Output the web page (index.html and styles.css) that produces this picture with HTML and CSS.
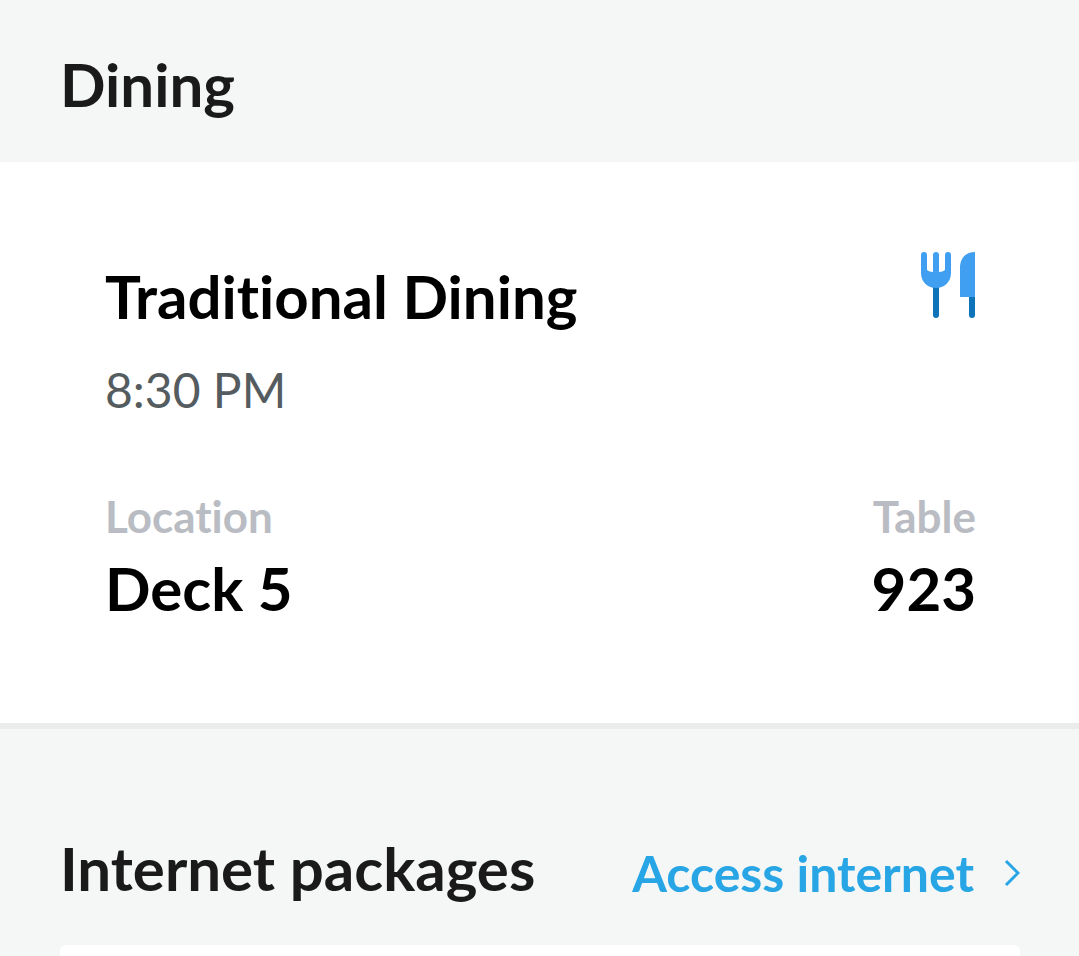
FILE: index.html
```html
<!DOCTYPE html>
<html lang="en">
<head>
<meta charset="utf-8">
<meta name="viewport" content="width=device-width, initial-scale=1">
<title>Dining</title>
<link rel="stylesheet" href="styles.css">
</head>
<body>
<main class="page">
  <header class="section-head">
    <h1 class="section-title">Dining</h1>
  </header>
  <section class="dining">
    <div class="row">
      <h2 class="dining-name">Traditional Dining</h2>
      <svg class="cutlery" viewBox="0 0 56 68" aria-hidden="true">
        <path fill="#0f73b9" d="M13 34h6v31a3 3 0 0 1-6 0zM49 44h6v21a3 3 0 0 1-6 0z"/>
        <path fill="#409ff0" d="M1 5a3 3 0 0 1 6 0v15q2 2 6 2V5a3 3 0 0 1 6 0v17q4 0 6-2V5a3 3 0 0 1 6 0v18c0 9-7 15-15 15S1 32 1 23zM55 2v45H40V18C40 8 46 2 55 2z"/>
      </svg>
    </div>
    <p class="time">8:30 PM</p>
    <dl class="row details">
      <div>
        <dt class="label">Location</dt>
        <dd class="value">Deck 5</dd>
      </div>
      <div class="end">
        <dt class="label">Table</dt>
        <dd class="value">923</dd>
      </div>
    </dl>
  </section>
  <section class="packages">
    <div class="row">
      <h2 class="section-title">Internet packages</h2>
      <a class="access" href="#packages">Access internet
        <svg class="chevron" viewBox="0 0 16 28" aria-hidden="true"><path d="M2 2l12 12L2 26" fill="none" stroke="currentColor" stroke-width="3"/></svg>
      </a>
    </div>
    <div class="card" id="packages"></div>
  </section>
</main>
</body>
</html>
```
FILE: styles.css
```css
* { box-sizing: border-box; margin: 0; }
body {
  background: #f5f7f7;
  color: #1a1a1a;
  font-family: "Lato", sans-serif;
  font-variant-ligatures: none;
}
.page { display: flex; flex-direction: column; min-height: 100vh; }
.row { display: flex; justify-content: space-between; }
.section-head { padding: 48px 60px 42px; }
.section-title { font-size: 60px; line-height: 72px; font-weight: 700; }
.dining {
  background: #fff;
  color: #000;
  padding: 88px 103px 93px 105px;
  border-bottom: 6px solid #eaecec;
}
.dining-name { font-size: 60px; line-height: 92px; font-weight: 700; }
.cutlery { width: 56px; height: 68px; }
.time { color: #555c60; font-size: 48px; line-height: 96px; }
.details { padding-top: 48px; }
.label { color: #b9bcc2; font-size: 44px; line-height: 60px; font-weight: 700; }
.value { font-size: 60px; line-height: 84px; font-weight: 700; }
.end { text-align: right; }
.packages {
  display: flex;
  flex: 1;
  flex-direction: column;
  padding: 103px 59px 0 60px;
}
.access {
  display: flex;
  align-items: center;
  gap: 30px;
  padding-top: 10px;
  color: #28a5e5;
  font-size: 50px;
  line-height: 62px;
  font-weight: 700;
  text-decoration: none;
}
.chevron { width: 16px; height: 28px; }
.card { flex: 1; margin-top: 41px; background: #fff; border-radius: 6px 6px 0 0; }
```
